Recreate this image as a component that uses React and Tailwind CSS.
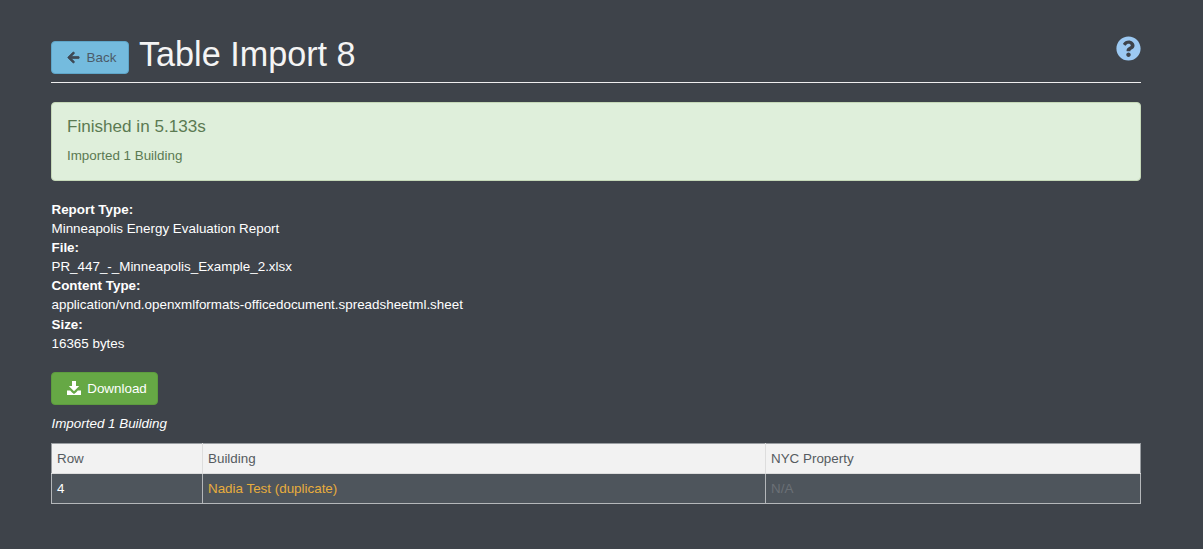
import React from 'react';
import { FaArrowLeft, FaQuestionCircle } from 'react-icons/fa';

const DownloadIcon = () => (
  <svg width="14" height="14" viewBox="0 0 14 14" fill="currentColor">
    <path d="M5 0h4v5h3.2L7 10.2 1.8 5H5z" />
    <path d="M0 9.5h3.2L5 11.5 7 13l2-1.5 1.8-2H14V14H0z" />
  </svg>
);

const App = () => {
  return (
    <div className="min-h-[549px] bg-[#3e434a] pl-[51px] pr-[62px] pt-[35px] font-['Liberation_Sans',Arial,sans-serif] text-[13.4px] leading-[19.1px] text-white">
      <div className="flex items-start border-b border-[#eeeeee] h-[48px]">
        <button className="mt-[6px] flex h-[33px] w-[78px] items-center justify-center gap-[7px] rounded border border-[#5fa6c9] bg-[#74bbde] pl-[3px] text-[#4b5a68]">
          <FaArrowLeft className="h-[13px] w-[13px] stroke-[30] text-[#3e4a56]" />
          Back
        </button>
        <h1 className="ml-[10px] text-[34.2px] leading-[38px] text-[#f4f4f4]">Table Import 8</h1>
        <FaQuestionCircle className="ml-auto mt-[1px] h-[25px] w-[25px] text-[#9cc9f2]" />
      </div>

      <div className="mt-[19px] h-[79px] rounded border border-[#c5d8b8] bg-[#dfefdb] px-[15px] pt-[14px] text-[#5b7a52]">
        <h4 className="text-[17.1px] leading-[20px]">Finished in 5.133s</h4>
        <p className="mt-[9px]">Imported 1 Building</p>
      </div>

      <dl className="ml-[0.5px] mt-[19px]">
        <dt className="font-bold">Report Type:</dt>
        <dd>Minneapolis Energy Evaluation Report</dd>
        <dt className="font-bold">File:</dt>
        <dd>PR_447_-_Minneapolis_Example_2.xlsx</dd>
        <dt className="font-bold">Content Type:</dt>
        <dd>application/vnd.openxmlformats-officedocument.spreadsheetml.sheet</dd>
        <dt className="font-bold">Size:</dt>
        <dd>16365 bytes</dd>
      </dl>

      <button className="mt-[19px] flex h-[33px] w-[107px] items-center justify-center gap-[6px] rounded border border-[#5d9c3e] bg-[#66a845] pl-[5px] text-white">
        <DownloadIcon />
        Download
      </button>

      <p className="ml-[0.5px] mt-[9px] italic">Imported 1 Building</p>

      <table className="mt-[10px] w-full table-fixed border-collapse">
        <thead>
          <tr className="h-[30px] bg-[#f2f2f2] text-[#555b60]">
            <th className="w-[151px] border border-[#dddddd] border-l-[#9a9ea2] border-t-[#9a9ea2] px-[5px] text-left font-normal">Row</th>
            <th className="w-[563px] border border-[#dddddd] border-t-[#9a9ea2] px-[5px] text-left font-normal">Building</th>
            <th className="border border-[#dddddd] border-r-[#9a9ea2] border-t-[#9a9ea2] px-[5px] text-left font-normal">NYC Property</th>
          </tr>
        </thead>
        <tbody>
          <tr className="h-[30px] bg-[#4e555c]">
            <td className="border border-[#b4b7ba] px-[5px]">4</td>
            <td className="border border-[#b4b7ba] px-[5px] text-[#e8ad3c]">Nadia Test (duplicate)</td>
            <td className="border border-[#b4b7ba] px-[5px] text-[#6b7076]">N/A</td>
          </tr>
        </tbody>
      </table>
    </div>
  );
};

export default App;
